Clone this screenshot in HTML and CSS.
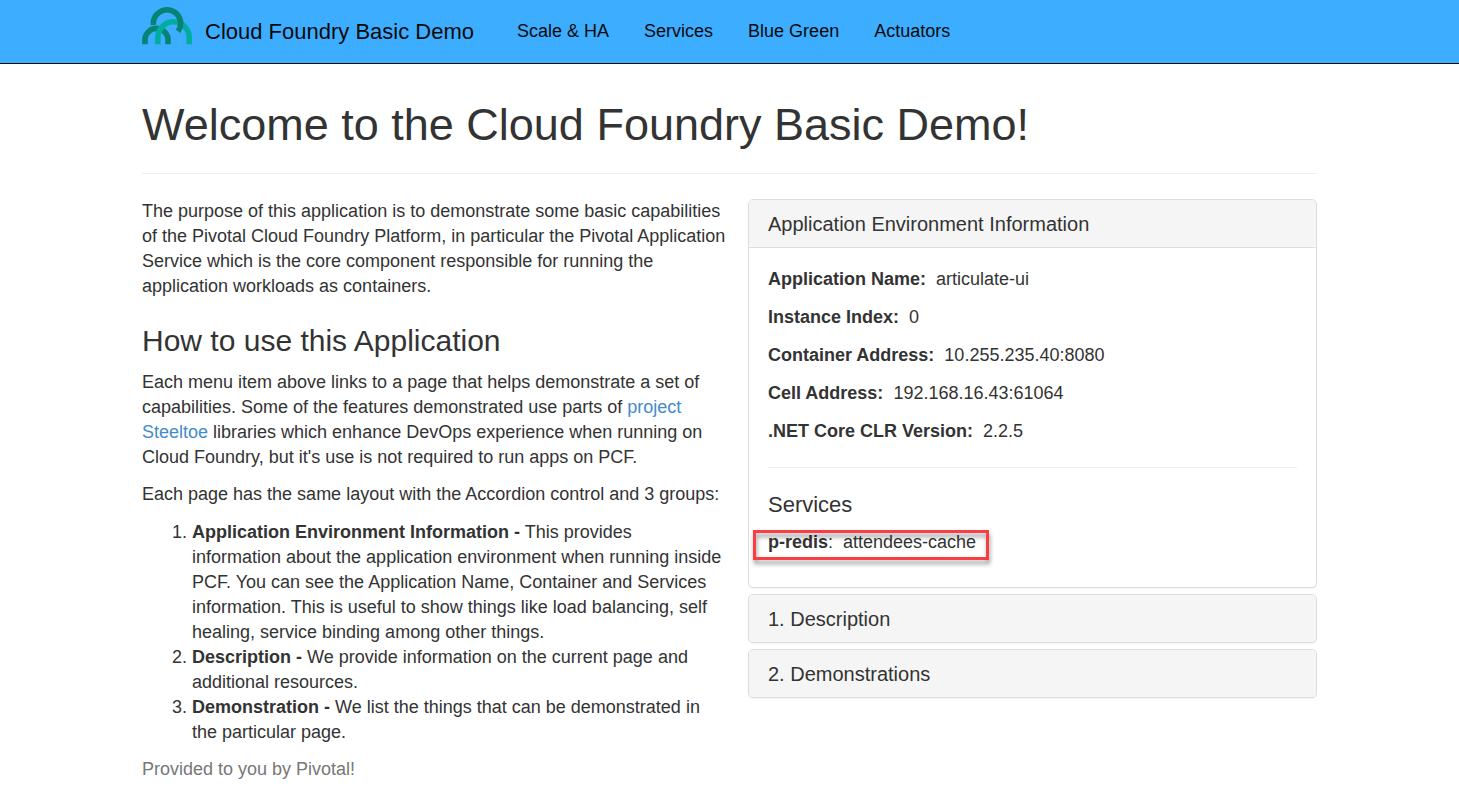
FILE: index.html
```html
<!DOCTYPE html>
<html lang="en">
<head>
<meta charset="utf-8">
<title>Cloud Foundry Basic Demo</title>
<link rel="stylesheet" href="styles.css">
</head>
<body>
<header class="navbar">
  <div class="container navbar-inner">
    <a class="brand" href="#">
      <svg class="logo" width="50" height="38" viewBox="0 0 50 38" fill="none" stroke-width="5.6" aria-hidden="true">
        <path d="M3 37.3V31.5A11.6 11.6 0 0 1 26 31.5V37.3" stroke="#078375"/>
        <path d="M15.8 37.3V30.7A15.7 15.9 0 0 1 47.2 30.7V37.3" stroke="#00ae9e"/>
        <path d="M11.5 18A13.6 13.6 0 1 1 36.1 24.3" stroke="#078375"/>
      </svg>
      <span class="brand-text">Cloud Foundry Basic Demo</span>
    </a>
    <nav class="nav">
      <a href="#">Scale &amp; HA</a>
      <a href="#">Services</a>
      <a href="#">Blue Green</a>
      <a href="#">Actuators</a>
    </nav>
  </div>
</header>
<main class="container">
  <div class="page-header">
    <h1>Welcome to the Cloud Foundry Basic Demo!</h1>
  </div>
  <div class="columns">
    <section class="intro">
      <p>The purpose of this application is to demonstrate some basic capabilities of the Pivotal Cloud Foundry Platform, in particular the Pivotal Application Service which is the core component responsible for running the application workloads as containers.</p>
      <h2>How to use this Application</h2>
      <p>Each menu item above links to a page that helps demonstrate a set of capabilities. Some of the features demonstrated use parts of <a href="#">project Steeltoe</a> libraries which enhance DevOps experience when running on Cloud Foundry, but it's use is not required to run apps on PCF.</p>
      <p>Each page has the same layout with the Accordion control and 3 groups:</p>
      <ol>
        <li><strong>Application Environment Information -</strong> This provides information about the application environment when running inside PCF. You can see the Application Name, Container and Services information. This is useful to show things like load balancing, self healing, service binding among other things.</li>
        <li><strong>Description -</strong> We provide information on the current page and additional resources.</li>
        <li><strong>Demonstration -</strong> We list the things that can be demonstrated in the particular page.</li>
      </ol>
      <p class="muted">Provided to you by Pivotal!</p>
    </section>
    <section class="accordion">
      <div class="panel">
        <h3 class="panel-title"><button type="button" aria-expanded="true" aria-controls="environment">Application Environment Information</button></h3>
        <div class="panel-body" id="environment">
          <p><strong>Application Name:</strong>&nbsp; articulate-ui</p>
          <p><strong>Instance Index:</strong>&nbsp; 0</p>
          <p><strong>Container Address:</strong>&nbsp; 10.255.235.40:8080</p>
          <p><strong>Cell Address:</strong>&nbsp; 192.168.16.43:61064</p>
          <p><strong>.NET Core CLR Version:</strong>&nbsp; 2.2.5</p>
          <hr>
          <h4>Services</h4>
          <p class="service"><strong>p-redis</strong>:&nbsp; attendees-cache<span class="highlight"></span></p>
        </div>
      </div>
      <div class="panel">
        <h3 class="panel-title"><button type="button" aria-expanded="false">1. Description</button></h3>
      </div>
      <div class="panel">
        <h3 class="panel-title"><button type="button" aria-expanded="false">2. Demonstrations</button></h3>
      </div>
    </section>
  </div>
</main>
</body>
</html>
```
FILE: styles.css
```css
* {
  box-sizing: border-box;
}

body {
  margin: 0;
  background: #fff;
  color: #333;
  font-family: "Liberation Sans", Arial, sans-serif;
  font-size: 18px;
  line-height: 25px;
}

h1, h2, h3, h4 {
  margin: 0;
  font-weight: 400;
}

p {
  margin: 0 0 12px;
}

a {
  color: #428bca;
  text-decoration: none;
}

.container {
  max-width: 1213px;
  margin: 0 auto;
  padding: 0 19px;
}

.navbar {
  background: #3daeff;
  border-bottom: 1px solid #090909;
}

.navbar-inner {
  display: flex;
  align-items: center;
  gap: 43px;
  min-height: 63px;
}

.navbar a {
  color: #090909;
}

.brand {
  display: flex;
  gap: 13px;
  font-size: 22px;
}

.logo {
  display: block;
  margin-bottom: 12px;
}

.brand-text {
  padding-top: 12px;
}

.nav {
  display: flex;
  gap: 35px;
}

.page-header {
  margin: 36px 0 25px;
  padding-bottom: 24px;
  border-bottom: 1px solid #eee;
}

h1 {
  font-size: 45px;
  line-height: 49px;
}

.columns {
  display: grid;
  grid-template-columns: 586fr 569fr;
  gap: 20px;
  align-items: start;
}

h2 {
  margin: 25px 0 13px;
  font-size: 30px;
  line-height: 33px;
}

ol {
  margin: 13px 0 12px;
  padding: 0 4px 0 50px;
}

.muted {
  color: #777;
}

.accordion {
  display: grid;
  gap: 6px;
}

.panel {
  border: 1px solid #ddd;
  border-radius: 5px;
  background: #fff;
  box-shadow: 0 1px 1px rgba(0, 0, 0, 0.05);
}

.panel-title button {
  display: block;
  width: 100%;
  padding: 13px 19px 12px;
  border: 0;
  border-radius: 4px;
  background: #f5f5f5;
  color: #333;
  font: 20px/22px "Liberation Sans", Arial, sans-serif;
  text-align: left;
  cursor: pointer;
}

.panel-body {
  padding: 19px;
  border-top: 1px solid #ddd;
}

.panel-body p {
  margin-bottom: 13px;
}

hr {
  margin: 23px 0 24px;
  border: 0;
  border-top: 1px solid #eee;
}

h4 {
  margin-bottom: 13px;
  font-size: 22px;
  line-height: 25px;
}

.service {
  position: relative;
}

.highlight {
  position: absolute;
  top: 0;
  left: -15px;
  width: 236px;
  height: 30px;
  border: 3px solid #fb3d42;
  filter: drop-shadow(1px 4px 2px rgba(0, 0, 0, 0.4));
}
```
